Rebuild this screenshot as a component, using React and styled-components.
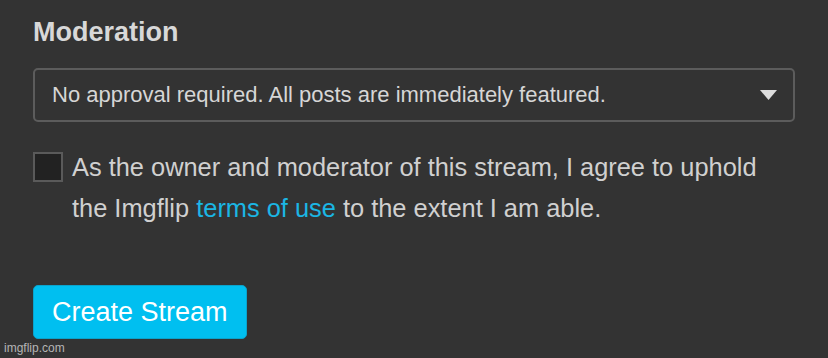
import React from "react";
import styled, { createGlobalStyle } from "styled-components";

const Global = createGlobalStyle`
  html, body { margin: 0; padding: 0; background: #333333; }
  body { font-family: "Liberation Sans", Arial, Helvetica, sans-serif; }
`;

const Page = styled.div`
  position: relative;
  width: 828px;
  height: 358px;
  box-sizing: border-box;
  padding: 17px 33px 0 33px;
  background: #333333;
  overflow: hidden;
`;

const Heading = styled.h2`
  margin: 0;
  font-size: 27px;
  line-height: 31px;
  font-weight: bold;
  color: #d8d8d8;
`;

const SelectBox = styled.div`
  margin-top: 20px;
  height: 54px;
  box-sizing: border-box;
  border: 2px solid #5c5c5c;
  border-radius: 5px;
  display: flex;
  align-items: center;
  justify-content: space-between;
  padding: 0 16px 0 17px;
  font-size: 22px;
  color: #d6d6d6;
`;

const Arrow = styled.svg`
  width: 17px;
  height: 10px;
  flex: none;
`;

const AgreeRow = styled.label`
  margin-top: 25px;
  display: flex;
  align-items: flex-start;
  gap: 9px;
`;

const Check = styled.span`
  margin-top: 5px;
  width: 30px;
  height: 30px;
  box-sizing: border-box;
  flex: none;
  background: #222222;
  border: 2px solid #5a5a5a;
`;

const AgreeText = styled.div`
  font-size: 25.4px;
  line-height: 41px;
  color: #d0d0d0;
`;

const Link = styled.a`
  color: #1bb6e4;
  text-decoration: none;
`;

const Button = styled.button`
  margin-top: 56px;
  height: 54px;
  padding: 0 18px;
  box-sizing: border-box;
  background: #00bff0;
  border: 1px solid #0aa3cc;
  border-radius: 5px;
  color: #ffffff;
  font-family: "Liberation Sans", Arial, Helvetica, sans-serif;
  font-size: 27px;
  display: block;
  cursor: pointer;
`;

const Watermark = styled.div`
  position: absolute;
  left: 4px;
  bottom: 3px;
  font-size: 12px;
  color: #b5b5b5;
  font-family: "Liberation Sans", Arial, sans-serif;
`;

export default function App() {
  return (
    <>
      <Global />
      <Page>
        <Heading>Moderation</Heading>
        <SelectBox>
          <span>No approval required. All posts are immediately featured.</span>
          <Arrow viewBox="0 0 17 10">
            <path d="M0 0 H17 L8.5 10 Z" fill="#dddddd" />
          </Arrow>
        </SelectBox>
        <AgreeRow>
          <Check />
          <AgreeText>
            As the owner and moderator of this stream, I agree to uphold
            <br />
            the Imgflip <Link href="#">terms of use</Link> to the extent I am able.
          </AgreeText>
        </AgreeRow>
        <Button>Create Stream</Button>
        <Watermark>imgflip.com</Watermark>
      </Page>
    </>
  );
}
